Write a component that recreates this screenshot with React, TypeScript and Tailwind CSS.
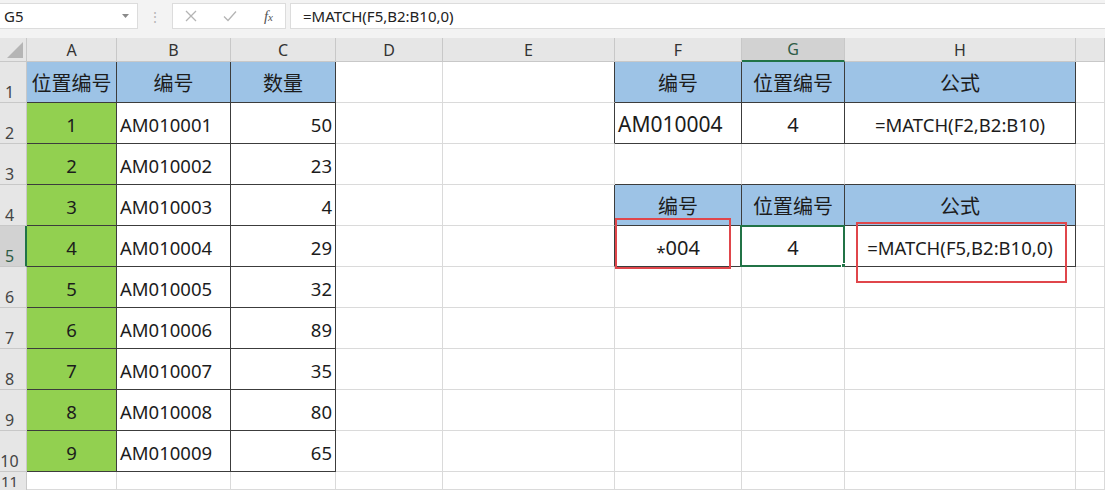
import React from 'react';

const FONT = "font-['Noto_Sans','Noto_Sans_CJK_SC',sans-serif]";
const LETTERS = ['A', 'B', 'C', 'D', 'E', 'F', 'G', 'H', ''];
const QTY = [50, 23, 4, 29, 32, 89, 35, 80, 65];

type CellSpec = { text?: React.ReactNode; fill?: 'blue' | 'green'; align?: 'left' | 'center' | 'right'; size?: string };

function inTable(r: number, c: number) {
  if (r >= 1 && r <= 10 && c >= 0 && c <= 2) return true;
  if ([1, 2, 4, 5].includes(r) && c >= 5 && c <= 7) return true;
  return false;
}

function spec(r: number, c: number): CellSpec {
  if (r === 1 && c <= 2) return { text: ['位置编号', '编号', '数量'][c], fill: 'blue', align: 'center', size: 'text-[20px]' };
  if (r >= 2 && r <= 10 && c === 0) return { text: String(r - 1), fill: 'green', align: 'center' };
  if (r >= 2 && r <= 10 && c === 1) return { text: `AM01000${r - 1}`, align: 'left' };
  if (r >= 2 && r <= 10 && c === 2) return { text: String(QTY[r - 2]), align: 'right' };
  if ((r === 1 || r === 4) && c >= 5 && c <= 7)
    return { text: ['编号', '位置编号', '公式'][c - 5], fill: 'blue', align: 'center', size: 'text-[20px]' };
  if (r === 2 && c === 5) return { text: 'AM010004', align: 'left', size: 'text-[21px]' };
  if (r === 2 && c === 6) return { text: '4', align: 'center', size: 'text-[20px]' };
  if (r === 2 && c === 7) return { text: '=MATCH(F2,B2:B10)', align: 'center' };
  if (r === 5 && c === 5)
    return {
      text: (
        <>
          <span className="relative top-[4px] text-[17px]">*</span>004
        </>
      ),
      align: 'center',
      size: 'text-[20px]',
    };
  if (r === 5 && c === 6) return { text: '4', align: 'center', size: 'text-[20px]' };
  if (r === 5 && c === 7) return { text: '=MATCH(F5,B2:B10,0)', align: 'center' };
  return {};
}

function Cell({ r, c }: { r: number; c: number }) {
  const s = spec(r, c);
  const darkR = inTable(r, c) || inTable(r, c + 1);
  const darkB = inTable(r, c) || inTable(r + 1, c);
  const bg = s.fill === 'blue' ? 'bg-[#9dc3e6]' : s.fill === 'green' ? 'bg-[#92d050]' : 'bg-white';
  const justify = s.align === 'left' ? 'justify-start pl-[3px]' : s.align === 'right' ? 'justify-end pr-[3px]' : 'justify-center';
  const selected = r === 5 && c === 6;
  return (
    <div
      className={`relative flex items-center pt-[3px] whitespace-nowrap text-[#1c1c1c] ${s.size ?? 'text-[18.5px]'} ${bg} ${justify} border-r border-b ${darkR ? 'border-r-[#3c3c3c]' : 'border-r-[#dadada]'} ${darkB ? 'border-b-[#3c3c3c]' : 'border-b-[#dadada]'}`}
    >
      {s.text}
      {selected && (
        <>
          <div className="absolute -left-[2px] -top-[1px] -right-[1px] -bottom-[1px] border-2 border-[#217346]" />
          <div className="absolute -right-[3px] -bottom-[3px] w-[6px] h-[6px] bg-[#217346] border border-white" />
        </>
      )}
    </div>
  );
}

export default function App() {
  const rows = Array.from({ length: 11 }, (_, i) => i + 1);
  return (
    <div className={`w-[1105px] h-[490px] overflow-hidden bg-white ${FONT}`}>
      {/* formula bar */}
      <div className="h-[38px] bg-[#f3f3f3] flex items-start pt-[3px] gap-0">
        <div className="w-[138px] h-[26px] bg-white border border-[#dcdcdc] border-l-0 flex items-center justify-between pl-[4px] pr-[8px] text-[15px] text-[#222]">
          <span>G5</span>
          <svg width="7" height="5" viewBox="0 0 7 5"><path d="M0 0h7L3.5 4z" fill="#8a8a8a" /></svg>
        </div>
        <div className="w-[34px] h-[26px] flex items-center justify-center text-[#b8b8b8] text-[14px]">⋮</div>
        <div className="w-[114px] h-[26px] bg-white border border-[#dcdcdc] flex items-center justify-between px-[12px]">
          <svg width="12" height="12" viewBox="0 0 12 12"><path d="M1 1l10 10M11 1L1 11" stroke="#b4b4b4" strokeWidth="1.3" /></svg>
          <svg width="14" height="12" viewBox="0 0 14 12"><path d="M1 6.5l4 4L13 1.5" stroke="#b4b4b4" strokeWidth="1.3" fill="none" /></svg>
          <span className="font-['Liberation_Serif',serif] italic text-[15px] text-[#555]">f<span className="text-[11px]">x</span></span>
        </div>
        <div className="ml-[4px] flex-1 h-[26px] bg-white border border-[#dcdcdc] border-r-0 flex items-center pl-[12px] text-[15px] text-[#222]">
          =MATCH(F5,B2:B10,0)
        </div>
      </div>

      {/* sheet */}
      <div className="relative grid grid-cols-[27px_90px_114px_105px_107px_172px_127px_103px_231px_1fr] grid-rows-[24px_repeat(10,41px)_18px]">
        {/* column headers */}
        <div className="bg-[#e6e6e6] border-r border-b border-[#c8c8c8] flex items-end justify-end p-[3px]">
          <svg width="16" height="16" viewBox="0 0 16 16"><path d="M16 0V16H0z" fill="#b5b5b5" /></svg>
        </div>
        {LETTERS.map((l, i) => (
          <div
            key={i}
            className={`flex items-center justify-center text-[16px] border-r ${i === 6 ? 'bg-[#d2d2d2] text-[#2e5c46] border-b-2 border-b-[#217346] border-r-[#c8c8c8]' : 'bg-[#e6e6e6] text-[#333] border-b border-[#c8c8c8]'}`}
          >
            {l}
          </div>
        ))}

        {rows.map(r => (
          <React.Fragment key={r}>
            <div
              className={`flex items-end ${r === 11 ? 'text-[15px] leading-[16px] pb-[1px]' : 'text-[16px] leading-[18px] pb-[1px] border-b'} ${r === 5 ? 'bg-[#d2d2d2] text-[#2e5c46] border-r-2 border-r-[#217346] border-b-[#c8c8c8]' : 'bg-[#e6e6e6] text-[#444] border-r border-[#c8c8c8]'}`}
            >
              <span className="w-[19px] text-center">{r}</span>
            </div>
            {LETTERS.map((_, c) => (
              <Cell key={c} r={r} c={c} />
            ))}
          </React.Fragment>
        ))}

        {/* red annotation boxes */}
        <div className="absolute left-[615px] top-[180px] w-[116px] h-[51px] border-2 border-[#e0464b]" />
        <div className="absolute left-[856px] top-[184px] w-[211px] h-[61px] border-2 border-[#e0464b]" />
      </div>
    </div>
  );
}
